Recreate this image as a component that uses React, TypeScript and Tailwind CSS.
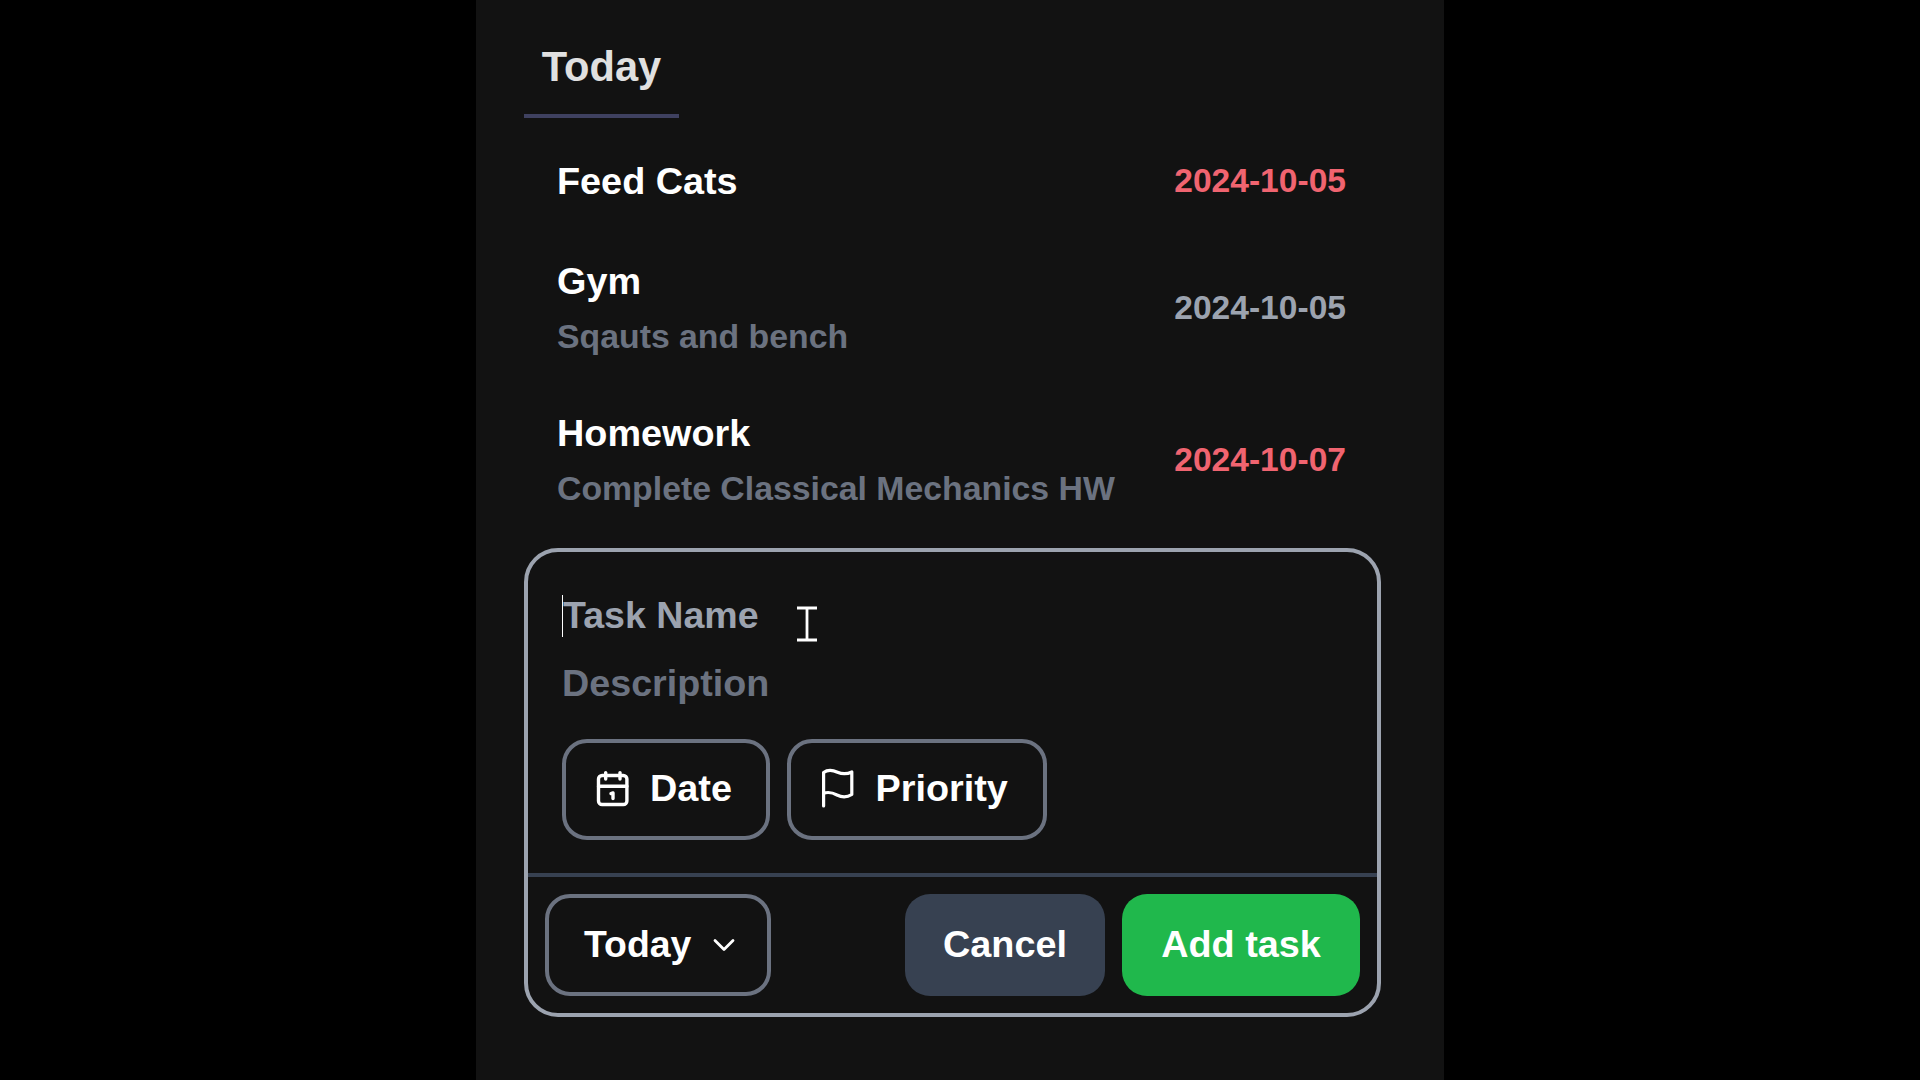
import React from "react";

type Task = { name: string; note?: string; date: string; overdue?: boolean };

const tasks: Task[] = [
  { name: "Feed Cats", date: "2024-10-05", overdue: true },
  { name: "Gym", note: "Sqauts and bench", date: "2024-10-05" },
  { name: "Homework", note: "Complete Classical Mechanics HW", date: "2024-10-07", overdue: true },
];

function CalendarIcon() {
  return (
    <svg className="-mt-[2px] h-[40px] w-[36px] shrink-0" viewBox="0 0 36 40" fill="none" stroke="currentColor" strokeWidth="3.4" strokeLinecap="round" strokeLinejoin="round">
      <rect x="4.5" y="6.5" width="28.4" height="29" rx="3.6" />
      <path d="M4.5 17.2H32.9M11.7 3.6v6.400M26 3.6v6.400" />
      <path d="M17 24.600l2-.6v5.600" />
    </svg>
  );
}

function FlagIcon() {
  return (
    <svg className="-mt-[2px] h-[44px] w-[36px] shrink-0" viewBox="0 0 36 44" fill="none" stroke="currentColor" strokeWidth="3.2" strokeLinecap="round" strokeLinejoin="round">
      <path d="M4.600 39V5.500C9 2.300 14 3.200 18.500 5.200C23 7.200 28 7.200 32.800 5V27.500C28 30.500 22 30 18 28C13.500 25.500 9 24.800 4.600 26.200" />
    </svg>
  );
}

function TaskRow({ task }: { task: Task }) {
  return (
    <div className="flex items-center justify-between">
      <div>
        <div className="text-[37.8px] leading-[56px] text-white">{task.name}</div>
        {task.note && <div className="text-[33.8px] leading-[54px] text-[#6b7280]">{task.note}</div>}
      </div>
      <div className={task.overdue ? "text-[33.6px] text-[#f06470]" : "text-[33.6px] text-[#9ca3af]"}>{task.date}</div>
    </div>
  );
}

export default function App() {
  return (
    <div className="flex h-[1080px] w-[1920px] justify-center overflow-hidden bg-black font-['Liberation_Sans',Arial,sans-serif] font-bold">
      <main className="h-full w-[968px] bg-[#121212] pl-[48px] pr-[64px]">
        <div className="flex h-[118px] w-[155px] justify-center border-b-4 border-[#3f4160] pt-[37px] text-[41.6px] leading-[60px] text-[#e0e0e0]">
          Today
        </div>
        <section className="flex h-[430px] flex-col gap-[42px] pl-[33px] pr-[34px] pt-[35px]">
          <TaskRow task={tasks[0]} />
          <div className="mt-[2px] flex flex-col gap-[42px]">
            {tasks.slice(1).map((task) => (
              <TaskRow key={task.name} task={task} />
            ))}
          </div>
        </section>
        <form className="h-[469px] w-[857px] rounded-[34px] border-4 border-[#9ca3af]">
          <div className="h-[321px] pl-[34px] pt-[34px]">
            <div className="flex h-[60px] items-center text-[37.6px] text-[#9ca3af]">
              <span className="h-[42px] w-px bg-white" />
              <span className="-mt-[2px]">Task Name</span>
              <svg className="ml-[38px] mt-[15px] h-[36px] w-[20px]" viewBox="0 0 20 36" fill="none" stroke="#fff" strokeWidth="2.8">
                <path d="M0 2H20M0 34H20M10 2V34" />
              </svg>
            </div>
            <div className="flex h-[74px] items-center text-[37.7px] text-[#6b7280]">Description</div>
            <div className="mt-[19px] flex gap-[17px] text-[37.8px] text-white">
              <div className="flex h-[101px] w-[208px] items-center rounded-[25px] border-4 border-[#6b7280] pl-[28px]">
                <CalendarIcon />
                <span className="-mt-[2px] ml-[20px]">Date</span>
              </div>
              <div className="flex h-[101px] w-[260px] items-center rounded-[25px] border-4 border-[#6b7280] pl-[28px]">
                <FlagIcon />
                <span className="-mt-[2px] ml-[20.500px]">Priority</span>
              </div>
            </div>
          </div>
          <div className="flex h-[140px] items-start border-t-4 border-[#374151] px-[17px] pt-[17px] text-[37.8px] text-white">
            <div className="flex h-[102px] w-[226px] items-center rounded-[25px] border-4 border-[#6b7280] pl-[35px]">
              <span className="-mt-[2px] text-[37.4px]">Today</span>
              <svg className="ml-[22px] h-[14px] w-[22px]" viewBox="0 0 22 14" fill="none" stroke="currentColor" strokeWidth="2.8" strokeLinecap="round" strokeLinejoin="round">
                <path d="M2 2.500l9 9 9-9" />
              </svg>
            </div>
            <div className="ml-auto flex h-[102px] w-[200px] items-center justify-center rounded-[25px] bg-[#374151] pb-[2px]">Cancel</div>
            <div className="ml-[17px] flex h-[102px] w-[238px] items-center justify-center rounded-[25px] bg-[#20b84c] pb-[2px]">Add task</div>
          </div>
        </form>
      </main>
    </div>
  );
}
